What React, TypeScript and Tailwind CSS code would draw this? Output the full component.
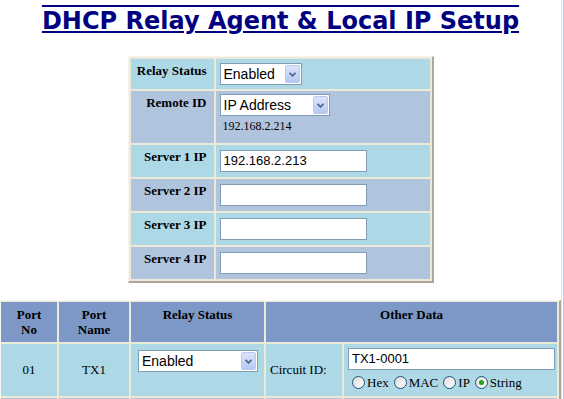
import React from "react";

const serif = "font-['Liberation_Serif','Times_New_Roman',serif]";
const sans = "font-['Liberation_Sans',Arial,sans-serif]";

function Select({ value, w }: { value: string; w: string }) {
  return (
    <div className={`${w} h-[22px] flex items-center border border-[#7f9db9] bg-white`}>
      <span className={`${sans} flex-1 pl-[3px] text-[14px] leading-none text-black`}>{value}</span>
      <span className="mr-[1px] flex h-[18px] w-[15px] items-center justify-center rounded-[2px] border border-[#b9c9f3] bg-gradient-to-b from-[#dbe4fb] to-[#b5c7f3]">
        <svg width="7" height="5" viewBox="0 0 7 5">
          <path d="M0.5 0.8 L3.5 3.8 L6.5 0.8" fill="none" stroke="#4d6185" strokeWidth="1.6" />
        </svg>
      </span>
    </div>
  );
}

function TextBox({ value, w }: { value?: string; w: string }) {
  return (
    <div className={`${w} h-[22px] flex items-center border border-[#7f9db9] bg-white px-[3px] ${sans} text-[13px] text-black`}>
      {value}
    </div>
  );
}

function Radio({ label, checked }: { label: string; checked?: boolean }) {
  return (
    <span className="flex items-center">
      <span className="flex h-[13px] w-[13px] items-center justify-center rounded-full border border-[#1c5180] bg-gradient-to-br from-[#dcdcd7] to-white">
        {checked && <span className="h-[5px] w-[5px] rounded-full bg-[#21a121]" />}
      </span>
      <span className={`${serif} ml-[2px] text-[13px] leading-none text-black`}>{label}</span>
    </span>
  );
}

const rowA = "bg-[#add8e6]";
const rowB = "bg-[#b0c4de]";
const label = `${serif} text-right pr-[7px] pt-[4px] text-[13px] font-bold leading-[15px] text-black`;

export default function App() {
  return (
    <div className="flex w-[564px] min-h-[399px] bg-white">
      <main className="w-[561px]">
        <div className="h-[56px] pt-[7px] text-center">
          <h1 className="font-['DejaVu_Sans',Verdana,sans-serif] text-[24px] font-bold leading-[28px] text-[#000080] [text-decoration-line:underline_overline]">
            DHCP Relay Agent &amp; Local IP Setup
          </h1>
        </div>

        <div className="mx-auto grid w-[306px] grid-cols-[83px_214px] grid-rows-[30px_52px_32px_32px_32px_32px] gap-[2px] border-t border-l border-r-2 border-b-2 border-t-[#f7f6f0] border-l-[#f7f6f0] border-r-[#aca899] border-b-[#aca899] bg-[#ece9d8] p-[2px]">
          <div className={`${rowA} ${label}`}>Relay Status</div>
          <div className={`${rowA} pl-[4px] pt-[4px]`}>
            <Select value="Enabled" w="w-[82px]" />
          </div>

          <div className={`${rowB} ${label}`}>Remote ID</div>
          <div className={`${rowB} pl-[4px] pt-[3px]`}>
            <Select value="IP Address" w="w-[110px]" />
            <div className={`${serif} mt-[3px] pl-[3px] text-[12px] leading-[14px] text-black`}>192.168.2.214</div>
          </div>

          <div className={`${rowA} ${label}`}>Server 1 IP</div>
          <div className={`${rowA} flex items-center pl-[4px]`}>
            <TextBox value="192.168.2.213" w="w-[147px]" />
          </div>

          <div className={`${rowB} ${label}`}>Server 2 IP</div>
          <div className={`${rowB} flex items-center pl-[4px]`}>
            <TextBox w="w-[147px]" />
          </div>

          <div className={`${rowA} ${label}`}>Server 3 IP</div>
          <div className={`${rowA} flex items-center pl-[4px]`}>
            <TextBox w="w-[147px]" />
          </div>

          <div className={`${rowB} ${label}`}>Server 4 IP</div>
          <div className={`${rowB} flex items-center pl-[4px]`}>
            <TextBox w="w-[147px]" />
          </div>
        </div>

        <div className="mt-[17px] grid w-[561px] grid-cols-[56px_70px_133px_76px_213px] grid-rows-[40px_52px_52px] gap-[2px] border-t border-l border-r-2 border-b-2 border-t-[#f7f6f0] border-l-[#f7f6f0] border-r-[#aca899] border-b-[#aca899] bg-[#ece9d8] pt-[1px] pr-[2px] pb-[2px]">
          {["Port No", "Port Name", "Relay Status"].map((h) => (
            <div key={h} className={`${serif} bg-[#7d98c6] px-[2px] pt-[5px] text-center text-[13px] font-bold leading-[15px] text-black`}>
              {h === "Relay Status" ? h : (
                <>
                  {h.split(" ")[0]}
                  <br />
                  {h.split(" ")[1]}
                </>
              )}
            </div>
          ))}
          <div className={`${serif} col-span-2 bg-[#7d98c6] pt-[5px] text-center text-[13px] font-bold leading-[15px] text-black`}>
            Other Data
          </div>

          <div className={`${rowA} ${serif} flex items-center justify-center text-[13px] text-black`}>01</div>
          <div className={`${rowA} ${serif} flex items-center justify-center text-[13px] text-black`}>TX1</div>
          <div className={`${rowA} pl-[7px] pt-[6px]`}>
            <Select value="Enabled" w="w-[120px]" />
          </div>
          <div className={`${rowA} ${serif} flex items-center pl-[4px] text-[13px] text-black`}>Circuit ID:</div>
          <div className={`${rowA} pl-[4px] pt-[4px]`}>
            <TextBox value="TX1-0001" w="w-[207px]" />
            <div className="mt-[6px] flex items-center gap-[5px] pl-[4px]">
              <Radio label="Hex" />
              <Radio label="MAC" />
              <Radio label="IP" />
              <Radio label="String" checked />
            </div>
          </div>

          {/* next port row, only its top edge is in view */}
          <div className={rowB} />
          <div className={rowB} />
          <div className={rowB} />
          <div className={rowB} />
          <div className={rowB} />
        </div>
      </main>
      <div className="w-[3px] border-l border-r border-l-[#e2e2e2] border-r-[#b8c6f0]" />
    </div>
  );
}
